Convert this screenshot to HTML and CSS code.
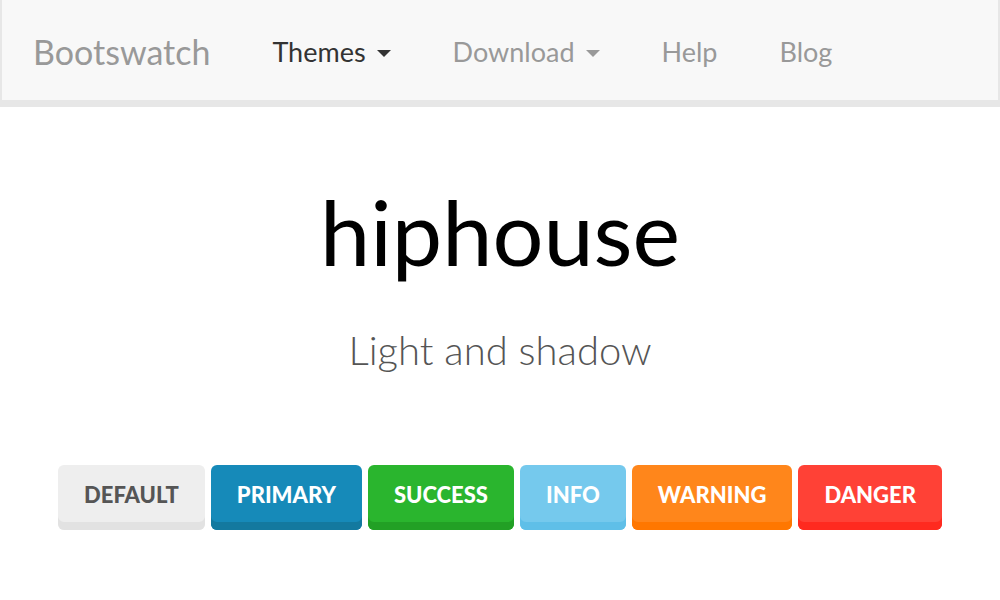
FILE: index.html
```html
<!DOCTYPE html>
<html>
<head>
<meta charset="utf-8">
<link rel="stylesheet" href="styles.css">
</head>
<body>
<nav class="navbar">
  <a class="brand">Bootswatch</a>
  <ul class="nav">
    <li><a class="nav-link active">Themes <span class="caret"></span></a></li>
    <li><a class="nav-link">Download <span class="caret"></span></a></li>
    <li><a class="nav-link">Help</a></li>
    <li><a class="nav-link">Blog</a></li>
  </ul>
</nav>
<main class="hero">
  <h1 class="title">hiphouse</h1>
  <p class="lead">Light and shadow</p>
  <div class="buttons">
    <a class="btn btn-default">Default</a>
    <a class="btn btn-primary">Primary</a>
    <a class="btn btn-success">Success</a>
    <a class="btn btn-info">Info</a>
    <a class="btn btn-warning">Warning</a>
    <a class="btn btn-danger">Danger</a>
  </div>
</main>
</body>
</html>
```
FILE: styles.css
```css
html, body {
  margin: 0;
  padding: 0;
  background: #ffffff;
  font-family: "Lato", "Open Sans", sans-serif;
}

.navbar {
  display: flex;
  align-items: center;
  box-sizing: border-box;
  height: 107px;
  padding-top: 3px;
  background: #f8f8f8;
  border-left: 2px solid #e7e7e7;
  border-right: 2px solid #e7e7e7;
  border-bottom: 7px solid #e7e7e7;
}

.brand {
  padding: 0 31px;
  font-size: 34px;
  color: #999999;
}

.nav {
  display: flex;
  list-style: none;
  margin: 0;
  padding: 0;
}

.nav-link {
  display: flex;
  align-items: center;
  padding: 0 31px;
  font-size: 27px;
  color: #999999;
}

.nav-link.active {
  color: #333333;
}

.caret {
  display: inline-block;
  width: 0;
  height: 0;
  margin-left: 11px;
  margin-top: 3px;
  border-left: 7px solid transparent;
  border-right: 7px solid transparent;
  border-top: 7px solid currentColor;
}

.hero {
  display: flex;
  flex-direction: column;
  align-items: center;
  padding-top: 75px;
}

.title {
  margin: 0;
  font-size: 90px;
  font-weight: 400;
  line-height: 1.1;
  color: #000000;
}

.lead {
  margin: 47px 0 0;
  font-size: 40px;
  font-weight: 300;
  line-height: 1.1;
  color: #555555;
}

.buttons {
  display: flex;
  gap: 6px;
  margin-top: 93px;
}

.btn {
  display: flex;
  align-items: center;
  justify-content: center;
  box-sizing: border-box;
  height: 65px;
  padding: 0 26px 6px;
  border-radius: 6px;
  font-size: 22px;
  font-weight: 900;
  text-transform: uppercase;
  color: #ffffff;
}

.btn-default { background: #eeeeee; color: #555555; box-shadow: inset 0 -8px 0 #e2e2e2; }
.btn-primary { background: #168ab9; box-shadow: inset 0 -8px 0 #13799f; }
.btn-success { background: #2ab52e; box-shadow: inset 0 -8px 0 #22a025; }
.btn-info    { background: #75c9ed; box-shadow: inset 0 -8px 0 #5fbfe8; }
.btn-warning { background: #ff861b; box-shadow: inset 0 -8px 0 #ff7700; }
.btn-danger  { background: #ff4136; box-shadow: inset 0 -8px 0 #ff2a1f; }
```
